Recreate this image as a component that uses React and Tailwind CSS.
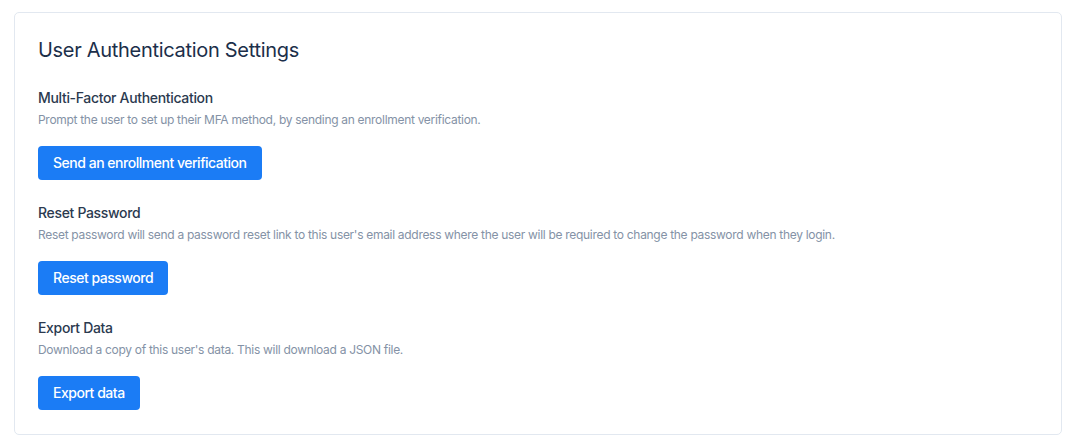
const sections = [
  {
    title: "Multi-Factor Authentication",
    text: "Prompt the user to set up their MFA method, by sending an enrollment verification.",
    action: "Send an enrollment verification",
  },
  {
    title: "Reset Password",
    text: "Reset password will send a password reset link to this user's email address where the user will be required to change the password when they login.",
    action: "Reset password",
  },
  {
    title: "Export Data",
    text: "Download a copy of this user's data. This will download a JSON file.",
    action: "Export data",
  },
];

export default function App() {
  return (
    <div className="min-h-[448px] bg-white pl-[14px] pr-[18px] pt-[12px] font-['Inter',sans-serif]">
      <div className="rounded-[5px] border border-[#e2e8f0] bg-white px-[23px] pb-[24px] pt-[23px]">
        <h1 className="text-[20px] leading-[28px] tracking-[-0.3px] text-[#1c2f4a]">
          User Authentication Settings
        </h1>

        <div className="mt-[24px] flex flex-col gap-[23px]">
          {sections.map((s) => (
            <div key={s.title}>
              <h2 className="text-[14px] font-medium leading-[20px] tracking-[-0.33px] text-[#2b3a4f]">
                {s.title}
              </h2>
              <p className="mt-[4px] text-[12px] leading-[16px] tracking-[-0.3px] text-[#8492a6]">
                {s.text}
              </p>
              <button className="mt-[18px] flex h-[34px] items-center rounded-[4px] bg-[#1b7cf5] px-[15px] text-[14px] font-medium leading-[20px] tracking-[-0.48px] text-white">
                {s.action}
              </button>
            </div>
          ))}
        </div>
      </div>
    </div>
  );
}
